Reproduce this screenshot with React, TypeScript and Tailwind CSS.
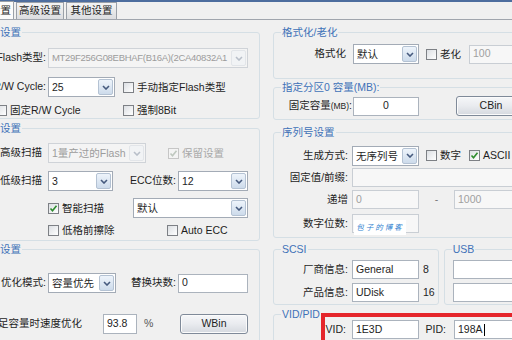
import clsx from 'clsx'
import type { ReactNode } from 'react'

function Chevron({ faded }: { faded?: boolean }) {
  return (
    <svg width="8" height="5" viewBox="0 0 8 5">
      <path d="M1 1l3 3 3-3" fill="none" stroke={faded ? '#b8bfc9' : '#465a7e'} strokeWidth="1.6" />
    </svg>
  )
}

function Combo({ value, w, disabled, valueClass }: { value: string; w: string; disabled?: boolean; valueClass?: string }) {
  return (
    <div
      className={clsx(
        'flex h-[20px] shrink-0 border',
        w,
        disabled ? 'border-[#cfd3d8] bg-[#f4f4f4] text-[#9c9c9c]' : 'border-[#a3abb6] bg-white text-[#1e1e1e]'
      )}
    >
      <div className={clsx('min-w-0 flex-1 overflow-hidden whitespace-nowrap pl-[3px] leading-[18px]', valueClass)}>{value}</div>
      <div
        className={clsx(
          'm-px flex w-[15px] shrink-0 items-center justify-center rounded-[2px] border',
          disabled ? 'border-[#e2e5e9] bg-[#f1f3f5]' : 'border-[#b4c2d3] bg-gradient-to-b from-[#eef4fb] to-[#cddbeb]'
        )}
      >
        <Chevron faded={disabled} />
      </div>
    </div>
  )
}

function Field({
  value,
  w,
  disabled,
  center,
  children,
}: {
  value?: string
  w: string
  disabled?: boolean
  center?: boolean
  children?: ReactNode
}) {
  return (
    <div
      className={clsx(
        'relative flex h-[19px] shrink-0 items-center border whitespace-nowrap',
        w,
        center ? 'justify-center' : 'pl-[3px]',
        disabled ? 'border-[#c9ced4] bg-[#f7f7f7] text-[#a0a0a0]' : 'border-[#abb3bd] bg-white text-[#1e1e1e]'
      )}
    >
      {value}
      {children}
    </div>
  )
}

function Check({ label, checked, disabled, className }: { label: string; checked?: boolean; disabled?: boolean; className?: string }) {
  return (
    <div className={clsx('flex shrink-0 items-center gap-[3px] whitespace-nowrap', disabled ? 'text-[#a8a8a8]' : 'text-[#1e1e1e]', className)}>
      <span
        className={clsx(
          'flex h-[11px] w-[11px] shrink-0 items-center justify-center border',
          disabled ? 'border-[#c6c6c6] bg-[#f4f4f4]' : 'border-[#7d8085] bg-gradient-to-br from-[#dcdfe3] to-white'
        )}
      >
        {checked && (
          <svg width="9" height="9" viewBox="0 0 9 9">
            <path d="M1.5 4.5l2 2.2 4-5" fill="none" stroke={disabled ? '#bfc8bf' : '#2e8c2e'} strokeWidth="1.6" />
          </svg>
        )}
      </span>
      <span className="leading-[13px]">{label}</span>
    </div>
  )
}

function Label({ w, children, className }: { w: string; children: ReactNode; className?: string }) {
  return <div className={clsx('flex shrink-0 justify-end whitespace-nowrap text-[#1e1e1e]', w, className)}>{children}</div>
}

function Btn({ children, w, className }: { children: ReactNode; w: string; className?: string }) {
  return (
    <div
      className={clsx(
        'flex h-[20px] shrink-0 items-center justify-center rounded-[3px] border border-[#7f8a99] bg-gradient-to-b from-[#f6f7f9] via-[#e9ebef] to-[#d5d9df] text-[#1e1e1e] shadow-[inset_0_0_0_1px_#fbfbfb]',
        w,
        className
      )}
    >
      {children}
    </div>
  )
}

function Group({ title, className, titleClass, children }: { title: string; className?: string; titleClass?: string; children: ReactNode }) {
  return (
    <div className={clsx('rounded-[3px] border border-[#d5dfe5]', className)}>
      <div className={clsx('-mt-[7px] h-[12px] w-fit bg-[#f0f0f0] px-px leading-[12px] text-[#3f72b8]', titleClass ?? 'ml-[7px]')}>
        {title}
      </div>
      {children}
    </div>
  )
}

export default function App() {
  return (
    <div className="h-[340px] w-[512px] overflow-hidden bg-[#f0f0f0] font-['Liberation_Sans','Noto_Sans_CJK_SC',sans-serif] text-[10.5px] text-[#1e1e1e]">
      <div className="h-[2px] bg-[#4d6d9e]" />

      {/* tabs */}
      <div className="flex h-[18px] items-end border-b border-[#a0a5ad]">
        <div className="-ml-[22px] flex h-[18px] w-[36px] items-center justify-end border-x border-t border-[#9aa0a8] bg-[#fbfbfb] pr-[2px]">
          设置
        </div>
        <div className="ml-[2px] flex h-[17px] w-[48px] items-center justify-center border border-b-0 border-[#9aa0a8] bg-gradient-to-b from-[#f4f4f4] to-[#dcdde0]">
          高级设置
        </div>
        <div className="ml-[2px] flex h-[17px] w-[51px] items-center justify-center border border-b-0 border-[#9aa0a8] bg-gradient-to-b from-[#f4f4f4] to-[#dcdde0]">
          其他设置
        </div>
      </div>

      <div className="flex">
        {/* left column */}
        <div className="-ml-[50px] w-[310px] shrink-0">
          <Group title="基本设置" className="mt-[12px] pb-px" titleClass="ml-[27px]">
            <div className="mt-[10px] flex h-[20px] items-center">
              <Label w="w-[95px]">Flash类型:</Label>
              <Combo
                value="MT29F256G08EBHAF(B16A)(2CA40832A1"
                w="ml-[2px] w-[200px]"
                disabled
                valueClass="text-[9.5px] tracking-[-0.3px]"
              />
            </div>
            <div className="mt-[9px] flex h-[20px] items-center">
              <Label w="w-[95px]">R/W Cycle:</Label>
              <Combo value="25" w="ml-[2px] w-[67px]" />
              <Check label="手动指定Flash类型" className="ml-[8px]" />
            </div>
            <div className="mt-[7px] flex h-[13px] items-center">
              <div className="w-[45px] shrink-0" />
              <div className="w-[127px] shrink-0">
                <Check label="固定R/W Cycle" />
              </div>
              <Check label="强制8Bit" />
            </div>
          </Group>

          <Group title="扫描设置" className="mt-[9px] pb-[3px]" titleClass="ml-[27px]">
            <div className="mt-[9px] flex h-[20px] items-center">
              <Label w="w-[95px]" className="pr-[4px]">
                高级扫描
              </Label>
              <Combo value="1量产过的Flash" w="ml-[2px] w-[98px]" disabled />
              <Check label="保留设置" checked disabled className="ml-[22px]" />
            </div>
            <div className="mt-[8px] flex h-[20px] items-center">
              <Label w="w-[95px]" className="pr-[4px]">
                低级扫描
              </Label>
              <Combo value="3" w="ml-[2px] w-[65px]" />
              <Label w="w-[63px]">ECC位数:</Label>
              <Combo value="12" w="ml-[2px] w-[70px]" />
            </div>
            <div className="mt-[7px] flex h-[20px] items-center">
              <div className="w-[97px] shrink-0" />
              <div className="w-[85px] shrink-0">
                <Check label="智能扫描" checked />
              </div>
              <Combo value="默认" w="w-[115px]" />
            </div>
            <div className="mt-[6px] flex h-[13px] items-center">
              <div className="w-[97px] shrink-0" />
              <div className="w-[119px] shrink-0">
                <Check label="低格前擦除" />
              </div>
              <Check label="Auto ECC" />
            </div>
          </Group>

          <Group title="优化设置" className="mt-[8px] h-[120px]" titleClass="ml-[27px]">
            <div className="mt-[18px] flex h-[20px] items-center">
              <Label w="w-[95px]">优化模式:</Label>
              <Combo value="容量优先" w="ml-[2px] w-[68px]" />
              <Label w="w-[60px]">替换块数:</Label>
              <Field value="0" w="ml-[2px] w-[70px]" />
            </div>
            <div className="mt-[21px] flex h-[20px] items-center">
              <Label w="w-[133px]" className="pr-[2px]">
                不足容量时速度优化
              </Label>
              <Field value="93.8" w="ml-[19px] w-[34px] h-[20px]" />
              <div className="w-[43px] shrink-0 pl-[7px] text-[#555]">%</div>
              <Btn w="w-[68px]">WBin</Btn>
            </div>
          </Group>
        </div>

        {/* right column */}
        <div className="ml-[13px] w-[260px] shrink-0">
          <Group title="格式化/老化" className="mt-[12px] pb-[14px]">
            <div className="mt-[6px] flex h-[20px] items-center">
              <Label w="w-[76px]" className="pr-[4px]">
                格式化
              </Label>
              <Combo value="默认" w="ml-[3px] w-[66px]" />
              <div className="ml-[7px] w-[43px] shrink-0">
                <Check label="老化" />
              </div>
              <Field value="100" w="w-[60px]" disabled />
            </div>
          </Group>

          <Group title="指定分区0 容量(MB):" className="mt-[8px] pb-[3px]">
            <div className="mt-[3px] flex h-[20px] items-center">
              <Label w="w-[79px]" className="items-baseline pr-[1px]">
                固定容量<span className="text-[8.5px]">(MB)</span>:
              </Label>
              <Field value="0" w="w-[66px]" center />
              <Btn w="ml-[37px] w-[70px]">CBin</Btn>
            </div>
          </Group>

          <Group title="序列号设置" className="mt-[12px] pb-[4px]">
            <div className="mt-[8px] flex h-[19px] items-center">
              <Label w="w-[78px]" className="pr-[4px]">
                生成方式:
              </Label>
              <Combo value="无序列号" w="w-[67px] h-[19px]" />
              <div className="ml-[7px] w-[43px] shrink-0">
                <Check label="数字" />
              </div>
              <Check label="ASCII" checked />
            </div>
            <div className="mt-[3px] flex h-[19px] items-center">
              <Label w="w-[78px]" className="pr-[4px]">
                固定值/前缀:
              </Label>
              <Field w="w-[180px]" disabled />
            </div>
            <div className="mt-[3px] flex h-[19px] items-center">
              <Label w="w-[78px]" className="pr-[4px]">
                递增
              </Label>
              <Field value="0" w="w-[67px]" disabled />
              <div className="w-[35px] shrink-0 text-center text-[#777]">-</div>
              <Field value="1000" w="w-[70px]" disabled />
            </div>
            <div className="mt-[5px] flex h-[19px] items-center">
              <Label w="w-[78px]" className="pr-[4px]">
                数字位数:
              </Label>
              <Field value="" w="w-[67px]" disabled>
                <div className="absolute left-[1px] top-[5px] flex h-[15px] w-[52px] items-center justify-center bg-white text-[7.5px] italic tracking-[2px] text-[#2f7fd0]">
                  包子的博客
                </div>
              </Field>
            </div>
          </Group>

          <div className="mt-[11px] flex">
            <Group title="SCSI" className="w-[167px] pb-[2px]">
              <div className="mt-[5px] flex h-[19px] items-center">
                <Label w="w-[78px]" className="pr-[4px]">
                  厂商信息:
                </Label>
                <Field value="General" w="w-[67px]" />
                <span className="ml-[4px]">8</span>
              </div>
              <div className="mt-[4px] flex h-[19px] items-center">
                <Label w="w-[78px]" className="pr-[4px]">
                  产品信息:
                </Label>
                <Field value="UDisk" w="w-[67px]" />
                <span className="ml-[4px]">16</span>
              </div>
            </Group>
            <Group title="USB" className="ml-[5px] w-[90px] pb-[2px]">
              <div className="mt-[5px] flex h-[19px] items-center">
                <Field w="ml-[8px] w-[70px]" />
              </div>
              <div className="mt-[4px] flex h-[19px] items-center">
                <Field w="ml-[8px] w-[70px]" />
              </div>
            </Group>
          </div>

          <Group title="VID/PID" className="relative mt-[9px] h-[40px]">
            <div className="flex h-[19px] items-center">
              <Label w="w-[78px]" className="pr-[6px]">
                VID:
              </Label>
              <Field value="1E3D" w="w-[67px]" />
              <Label w="w-[35px]" className="pr-[8px]">
                PID:
              </Label>
              <Field value="198A" w="w-[70px]">
                <span className="ml-px h-[12px] w-px bg-black" />
              </Field>
            </div>
            <div className="absolute left-[47px] top-[-2px] h-[40px] w-[200px] border-[4px] border-[#e5262b]" />
          </Group>
        </div>
      </div>
    </div>
  )
}
